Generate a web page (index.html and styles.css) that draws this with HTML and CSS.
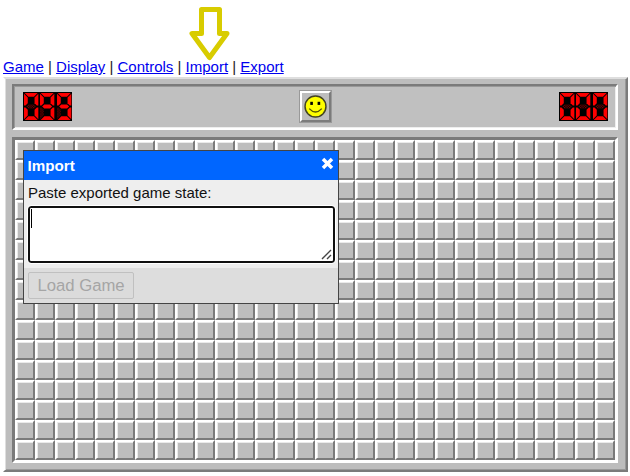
FILE: index.html
```
<!DOCTYPE html>
<html lang="en">
<head>
<meta charset="utf-8">
<title>Minesweeper</title>
<link rel="stylesheet" href="styles.css">
</head>
<body>
<svg class="pointer" width="42" height="56" viewBox="0 0 42 56"><path d="M13.5 4.5H31.5V28.5H39L21.500 52.5L4 28.5H13.5Z" fill="#fff" stroke="#d8cc00" stroke-width="5" stroke-linejoin="round"/></svg>
<nav class="links"><a href="#">Game</a> | <a href="#">Display</a> | <a href="#">Controls</a> | <a href="#">Import</a> | <a href="#">Export</a></nav>
<main class="frame">
  <header class="panel">
    <div class="counter" data-value="099"></div>
    <button class="face" aria-label="New game"><svg width="23" height="23" viewBox="0 0 22 22"><circle cx="11" cy="11" r="10" fill="#ff0" stroke="#444422" stroke-width="1.4"/><rect x="6" y="6.5" width="2.5" height="3"/><rect x="13" y="6.5" width="2.5" height="3"/><path d="M5 13Q11 19.5 17 13" fill="none" stroke="#555500" stroke-width="1.3"/></svg></button>
    <div class="counter" data-value="000"></div>
  </header>
  <section class="board"></section>
</main>
<section class="dialog">
  <header class="title"><span>Import</span><svg width="13" height="13" viewBox="0 0 13 13"><path d="M2 2L11 11M11 2L2 11" stroke="#fff" stroke-width="3.5"/></svg></header>
  <div class="content">
    <div class="label">Paste exported game state:</div>
    <div class="field"><i class="caret"></i><svg class="grip" width="11" height="11" viewBox="0 0 11 11"><path d="M1 10L10 1M6 10L10 6" stroke="#444" stroke-width="1.4"/></svg></div>
  </div>
  <footer class="actions"><button class="load" disabled>Load Game</button></footer>
</section>
<script src="app.js"></script>
</body>
</html>
```
FILE: styles.css
```
body {
  margin: 0;
  width: 630px;
  height: 476px;
  overflow: hidden;
  position: relative;
  background: #fff;
  font-family: "Liberation Sans", Arial, sans-serif;
}
.pointer { position: absolute; left: 188px; top: 5px; }
.links {
  padding: 58px 0 0 3px;
  height: 19px;
  font-size: 15px;
  line-height: 18px;
  white-space: nowrap;
  color: #222;
}
.links a { color: #00e; }
.frame {
  box-sizing: border-box;
  width: 625px;
  height: 395px;
  margin-left: 3px;
  padding: 5px 8px 9px 7px;
  background: #bdbdbd;
  border: 2px solid;
  border-color: #dedede #7b7b7b #7b7b7b #fff;
  box-shadow: inset 1px 0 #dedede, inset -1px -1px #999;
}
.panel {
  box-sizing: border-box;
  height: 46px;
  border: 2px solid;
  border-color: #7b7b7b #fff #fff #7b7b7b;
  box-shadow: inset 1px 1px #999, inset -1px -1px #eee;
  background: #c0c0c0;
  display: flex;
  align-items: center;
  justify-content: space-between;
  padding: 0 8px 1px 9px;
  margin-bottom: 7px;
}
.counter { display: flex; width: 49px; height: 29px; background: #000; }
.counter svg { flex: 1; width: 0; height: 29px; }
.face {
  box-sizing: border-box;
  width: 33px;
  height: 33px;
  padding: 0;
  display: grid;
  place-items: center;
  background: #bdbdbd;
  border: 3px solid;
  border-color: #fff #7b7b7b #7b7b7b #fff;
  outline: 1px solid #999;
  outline-offset: -1px;
}
.board {
  width: 600px;
  height: 320px;
  border: 3px solid;
  border-color: #7b7b7b #fff #fff #7b7b7b;
  display: grid;
  grid-template-columns: repeat(30, 20px);
  grid-auto-rows: 20px;
}
.cell {
  background: #bdbdbd;
  border: 2px solid;
  border-color: #fff #7b7b7b #7b7b7b #fff;
  box-shadow: inset 1px 1px #eaeaea;
}
.dialog {
  position: absolute;
  box-sizing: border-box;
  left: 23px;
  top: 150px;
  width: 316px;
  height: 154px;
  border: 1px solid #444;
  background: #eee;
  display: flex;
  flex-direction: column;
}
.title {
  height: 29px;
  display: flex;
  justify-content: space-between;
  align-items: center;
  padding: 0 4px 0 3.5px;
  background: #06f;
  color: #fff;
  font-weight: bold;
  font-size: 15.2px;
}
.title svg { margin-bottom: 3px; }
.content { height: 89px; padding: 0 3px 0 4px; box-sizing: border-box; }
.label { height: 26px; line-height: 26px; font-size: 15px; color: #111; }
.field {
  box-sizing: border-box;
  height: 57px;
  border: 2px solid #101010;
  border-radius: 3px;
  background: #fff;
  outline: 1px solid #fff;
  padding: 1px;
  display: flex;
  justify-content: space-between;
}
.caret { width: 1px; height: 19px; background: #000; }
.grip { align-self: flex-end; }
.actions { flex: 1; background: #ddd; padding: 4px; }
.load {
  display: block;
  box-sizing: border-box;
  width: 106px;
  height: 27px;
  padding: 0;
  border: 1px solid #c0c0c0;
  border-radius: 2px;
  background: #dbdbdb;
  color: #a5a5a5;
  font: 16.7px "Liberation Sans", Arial, sans-serif;
}
```
FILE: app.js
```
const segments = {
  a: "1.3,0.8 11.7,0.8 8.7,3.8 4.3,3.8",
  b: "12.2,1.4 12.2,10.8 11,10.8 9.2,9 9.2,4.4",
  c: "12.2,12.2 12.2,21.6 9.2,18.6 9.2,14 11,12.2",
  d: "1.3,22.2 11.7,22.2 8.7,19.2 4.3,19.2",
  e: "0.8,12.2 0.8,21.6 3.8,18.6 3.8,14 2,12.2",
  f: "0.8,1.4 0.8,10.8 2,10.8 3.8,9 3.8,4.4",
  g: "2.5,11.5 4.2,10 8.8,10 10.5,11.5 8.8,13 4.2,13"
};
const lit = { 0: "abcdef", 9: "abcdfg" };

document.querySelectorAll(".counter").forEach(counter => {
  counter.innerHTML = [...counter.dataset.value].map(digit => {
    const shapes = Object.entries(segments).map(([name, points]) => {
      const on = lit[digit].includes(name);
      return `<polygon points="${points}" fill="${on ? "#ff0000" : "url(#dim)"}"/>`;
    }).join("");
    return `<svg viewBox="0 0 13 23" preserveAspectRatio="none"><defs><pattern id="dim" width="2" height="2" patternUnits="userSpaceOnUse"><path d="M0 0h1v1H0zM1 1h1v1H1z" fill="#780000"/></pattern></defs>${shapes}</svg>`;
  }).join("");
});

const board = document.querySelector(".board");
for (let i = 0; i < 480; i++) {
  const cell = document.createElement("div");
  cell.className = "cell";
  board.append(cell);
}
```
